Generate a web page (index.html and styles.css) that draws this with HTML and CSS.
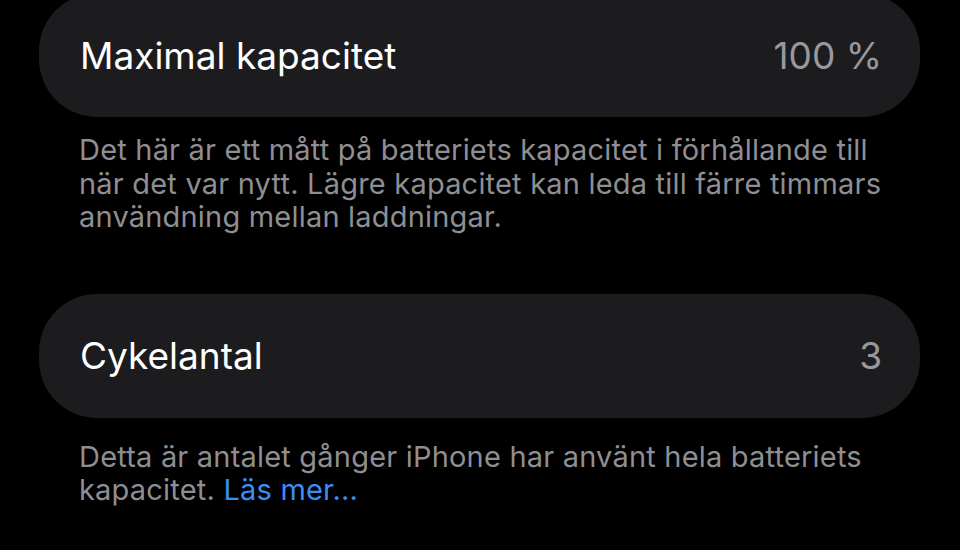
FILE: index.html
```html
<!DOCTYPE html>
<html lang="sv">
<head>
    <meta charset="UTF-8">
    <meta name="viewport" content="width=device-width, initial-scale=1.0">
    <title>Batteritillstånd</title>
    <link rel="stylesheet" href="styles.css">
</head>
<body>
    <div class="page">
        <div class="row first">
            <span class="label">Maximal kapacitet</span>
            <span class="value">100 %</span>
        </div>
        <p class="note">Det här är ett mått på batteriets kapacitet i förhållande till när det var nytt. Lägre kapacitet kan leda till färre timmars användning mellan laddningar.</p>

        <div class="row">
            <span class="label">Cykelantal</span>
            <span class="value">3</span>
        </div>
        <p class="note last">Detta är antalet gånger iPhone har använt hela batteriets kapacitet. <a href="#">Läs mer...</a></p>
    </div>
</body>
</html>
```

FILE: styles.css
```css
body {
    margin: 0;
    background: #000;
    font-family: Inter, "Noto Sans", sans-serif;
    overflow: hidden;
}
.page {
    padding: 0 40px 0 39px;
}
.row {
    display: flex;
    justify-content: space-between;
    align-items: center;
    height: 124px;
    padding: 0 38px 0 41px;
    background: #1c1c1e;
    border-radius: 58px;
    margin-top: 60px;
}
.row.first {
    margin-top: -7px;
}
.label {
    color: #fff;
    font-size: 37px;
}
.value {
    color: #98989f;
    font-size: 37px;
}
.note {
    margin: 16px 0 0 0;
    padding: 0 20px 0 40px;
    color: #8e8e93;
    font-size: 29px;
    letter-spacing: 0.2px;
    line-height: 33.5px;
}
.note.last {
    margin-top: 22px;
}
.note a {
    color: #3a8ef5;
    text-decoration: none;
}
```
